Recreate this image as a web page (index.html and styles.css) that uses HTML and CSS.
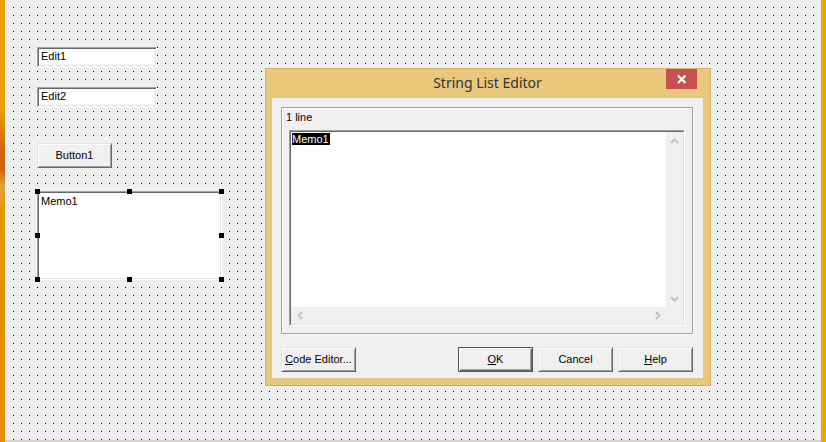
FILE: index.html
```html
<!DOCTYPE html>
<html>
<head>
<meta charset="utf-8">
<title>Form designer</title>
<link rel="stylesheet" href="styles.css">
</head>
<body>
<div class="screen">
  <div class="edge-left"></div>
  <div class="main">
    <div class="canvas">
      <div class="ctl edit edit-1">Edit1</div>
      <div class="ctl edit edit-2">Edit2</div>
      <div class="ctl btn btn-button1">Button1</div>
      <div class="ctl memo-wrap">
        <div class="sunken-out memo-canvas">
          <div class="sunken-in memo-canvas-inner">Memo1</div>
        </div>
        <span class="handle h-x1 h-y1"></span>
        <span class="handle h-x2 h-y1"></span>
        <span class="handle h-x3 h-y1"></span>
        <span class="handle h-x1 h-y2"></span>
        <span class="handle h-x3 h-y2"></span>
        <span class="handle h-x1 h-y3"></span>
        <span class="handle h-x2 h-y3"></span>
        <span class="handle h-x3 h-y3"></span>
      </div>

      <div class="dialog">
        <div class="titlebar">
          <span class="title">String List Editor</span>
          <div class="close">
            <svg width="31" height="20" viewBox="0 0 31 20"><path d="M12 6.5 L19.5 14 M19.5 6.5 L12 14" stroke="#fff" stroke-width="2.2" fill="none"/></svg>
          </div>
        </div>
        <div class="client">
          <div class="bevel">
            <div class="lines-label">1 line</div>
            <div class="sunken-out dlg-memo">
              <div class="sunken-in dlg-memo-inner">
                <div class="memo-text"><span class="sel">Memo1</span></div>
                <div class="vscroll">
                  <div class="arrow"><svg width="9" height="6" viewBox="0 0 9 6"><polyline points="1,5 4.5,1.5 8,5" fill="none" stroke="#c2c2c2" stroke-width="2"/></svg></div>
                  <div class="arrow"><svg width="9" height="6" viewBox="0 0 9 6"><polyline points="1,1 4.5,4.5 8,1" fill="none" stroke="#c2c2c2" stroke-width="2"/></svg></div>
                </div>
                <div class="hscroll">
                  <div class="arrow"><svg width="6" height="9" viewBox="0 0 6 9"><polyline points="5,1 1.5,4.5 5,8" fill="none" stroke="#c2c2c2" stroke-width="2"/></svg></div>
                  <div class="arrow"><svg width="6" height="9" viewBox="0 0 6 9"><polyline points="1,1 4.5,4.5 1,8" fill="none" stroke="#c2c2c2" stroke-width="2"/></svg></div>
                </div>
                <div class="corner"></div>
              </div>
            </div>
          </div>
          <div class="button-row">
            <div class="btn"><span><u>C</u>ode Editor...</span></div>
            <div class="btn btn-default push-right"><span><u>O</u>K</span></div>
            <div class="btn"><span>Cancel</span></div>
            <div class="btn"><span><u>H</u>elp</span></div>
          </div>
        </div>
      </div>
    </div>
    <div class="bottom"></div>
  </div>
  <div class="edge-right"></div>
</div>
</body>
</html>
```

FILE: styles.css
```css
* { box-sizing: border-box; }

html, body {
  margin: 0;
  padding: 0;
}

body {
  width: 826px;
  height: 442px;
  overflow: hidden;
  background: #f0f0f0;
  color: #000;
  font-family: "Liberation Sans", Arial, sans-serif;
  font-size: 11px;
  line-height: 13px;
}

.screen {
  display: flex;
  width: 826px;
  height: 442px;
}

.edge-left {
  width: 5px;
  background: linear-gradient(to bottom,
    #e9a300 0px, #e8a000 110px, #d2640e 150px, #d05e0c 168px,
    #e2a445 186px, #e39600 210px, #e38e00 442px);
}

.edge-right {
  width: 5px;
  background: #e8a900;
}

.main {
  flex: 1;
  display: flex;
  flex-direction: column;
}

/* dot grid: a 1px black row, masked by a layer that leaves only a 1px column */
.canvas {
  flex: 1;
  position: relative;
  border-left: 1px solid #f0f0f0;
  background-color: #f0f0f0;
  background-image:
    linear-gradient(to right, transparent 1px, #f0f0f0 1px),
    linear-gradient(to bottom, #000 1px, #f0f0f0 1px);
  background-size: 8px 8px;
  background-position: 7px 7px;
  background-clip: padding-box;
}

.bottom {
  height: 2px;
  background: #d8d4ca;
}

/* ---------- design-time controls on the form canvas ---------- */

.ctl { position: absolute; }

.edit {
  width: 120px;
  height: 20px;
  background: #fff;
  border-top: 1px solid #a0a0a0;
  border-left: 1px solid #a0a0a0;
  border-bottom: 1px solid #fff;
  border-right: 1px solid #fff;
  box-shadow: inset 1px 1px 0 #696969, inset -1px -1px 0 #e3e3e3;
  padding: 2px 3px;
  line-height: 13px;
}

.edit-1 { left: 31px; top: 47px; }
.edit-2 { left: 31px; top: 87px; }

.btn {
  width: 75px;
  height: 25px;
  display: flex;
  align-items: center;
  justify-content: center;
  background: #f0f0f0;
  border-top: 1px solid #e3e3e3;
  border-left: 1px solid #e3e3e3;
  border-bottom: 1px solid #696969;
  border-right: 1px solid #696969;
  box-shadow: inset 1px 1px 0 #fff, inset -1px -1px 0 #a0a0a0;
  padding-bottom: 1px;
}

.btn-button1 { left: 31px; top: 143px; }

.btn u { text-decoration: underline; text-underline-offset: 1px; }

.btn-default {
  border: 1px solid #555;
  box-shadow: inset 1px 1px 0 #fff, inset -1px -1px 0 #696969, inset -2px -2px 0 #a0a0a0;
}

.sunken-out {
  border-top: 1px solid #a0a0a0;
  border-left: 1px solid #a0a0a0;
  border-bottom: 1px solid #fff;
  border-right: 1px solid #fff;
}

.sunken-in {
  border-top: 1px solid #696969;
  border-left: 1px solid #696969;
  border-bottom: 1px solid #e3e3e3;
  border-right: 1px solid #e3e3e3;
  background: #fff;
}

.memo-wrap {
  left: 31px;
  top: 191px;
  width: 185px;
  height: 89px;
}

.memo-canvas { width: 185px; height: 89px; }

.memo-canvas-inner {
  height: 100%;
  padding: 2px 2px;
}

.handle {
  position: absolute;
  width: 5px;
  height: 5px;
  background: #000;
}

.h-x1 { left: -2px; }
.h-x2 { left: 90px; }
.h-x3 { left: 182px; }
.h-y1 { top: -2px; }
.h-y2 { top: 42px; }
.h-y3 { top: 86px; }

/* ---------- String List Editor dialog ---------- */

.dialog {
  position: absolute;
  left: 259px;
  top: 68px;
  width: 446px;
  border: 1px solid #d4b064;
  background: #e9c77b;
  padding: 0 7px 7px 6px;
}

.titlebar {
  position: relative;
  height: 29px;
  display: flex;
  align-items: center;
  justify-content: center;
}

.title {
  font-family: "Noto Sans", "Open Sans", sans-serif;
  font-size: 14px;
  line-height: 20px;
  color: #333;
  padding-bottom: 1px;
}

.close {
  position: absolute;
  top: 0;
  right: 6px;
  width: 31px;
  height: 20px;
  background: #c75050;
  display: flex;
}

.client {
  height: 280px;
  background: #f0f0f0;
  padding: 9px 10px 0 9px;
  display: flex;
  flex-direction: column;
}

.bevel {
  height: 227px;
  border: 1px solid #a0a0a0;
  box-shadow: 1px 1px 0 #fff, inset 1px 1px 0 #fff;
  padding: 3px 0 0 4px;
}

.lines-label {
  height: 13px;
  line-height: 13px;
}

.dlg-memo {
  margin: 6px 0 0 3px;
  width: 396px;
  height: 196px;
}

.dlg-memo-inner {
  height: 100%;
  display: grid;
  grid-template-columns: 1fr 17px;
  grid-template-rows: 1fr 17px;
}

.memo-text {
  padding: 1px 0 0 1px;
  background: #fff;
}

.sel {
  display: inline-block;
  background: #000;
  color: #fff;
  line-height: 12px;
  padding: 0 1px 0 0;
}

.vscroll {
  background: #f0f0f0;
  display: flex;
  flex-direction: column;
  justify-content: space-between;
}

.hscroll {
  background: #f0f0f0;
  display: flex;
  justify-content: space-between;
}

.arrow {
  width: 17px;
  height: 17px;
  display: flex;
  align-items: center;
  justify-content: center;
}

.corner { background: #f0f0f0; }

.button-row {
  display: flex;
  gap: 5px;
  margin-top: 13px;
}

.push-right { margin-left: auto; }
```
